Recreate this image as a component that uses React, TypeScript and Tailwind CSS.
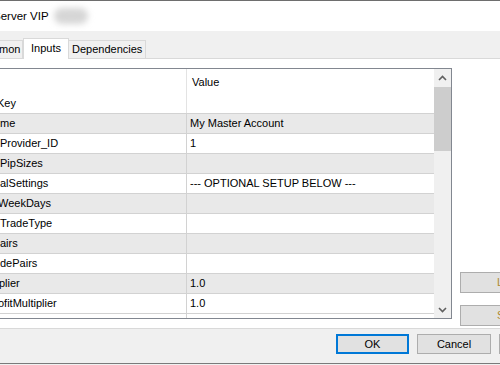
import React from "react";

interface Row {
  key: string;
  keyOffset: string;
  value: string;
}

const rows: Row[] = [
  { key: "me", keyOffset: "ml-0", value: "My Master Account" },
  { key: "Provider_ID", keyOffset: "ml-0", value: "1" },
  { key: "PipSizes", keyOffset: "ml-0", value: "" },
  { key: "alSettings", keyOffset: "ml-0", value: "--- OPTIONAL SETUP BELOW ---" },
  { key: "WeekDays", keyOffset: "-ml-[2px]", value: "" },
  { key: "TradeType", keyOffset: "ml-0", value: "" },
  { key: "airs", keyOffset: "ml-0", value: "" },
  { key: "dePairs", keyOffset: "ml-0", value: "" },
  { key: "plier", keyOffset: "-ml-[1px]", value: "1.0" },
  { key: "ofitMultiplier", keyOffset: "-ml-[2px]", value: "1.0" },
  { key: "", keyOffset: "ml-0", value: "" },
];

const Chevron: React.FC<{ down?: boolean }> = ({ down }) => (
  <svg width="9" height="6" viewBox="0 0 9 6" className="block">
    <path
      d={down ? "M1 1 L4.5 4.5 L8 1" : "M1 5 L4.5 1.5 L8 5"}
      fill="none"
      stroke="#606060"
      strokeWidth="1.6"
    />
  </svg>
);

const App: React.FC = () => {
  return (
    <div className="w-[500px] h-[365px] overflow-hidden bg-[#f0f0f0] flex flex-col text-black font-['Liberation_Sans',Arial,sans-serif] text-[11px] leading-[13px]">
      <div className="h-px shrink-0 bg-[#6e6e6e]" />

      {/* title bar */}
      <div className="h-[30px] shrink-0 bg-white flex items-center">
        <span className="-ml-[7px] text-[11.5px] whitespace-nowrap">Server VIP</span>
        <div className="ml-[5px] w-[34px] h-[16px] rounded-full bg-[#d6d6d6] blur-[3px]" />
      </div>

      {/* tab strip */}
      <div className="h-[27px] shrink-0 flex items-end">
        <div className="h-[18px] w-[23px] border border-b-0 border-l-0 border-[#d9d9d9] flex items-center overflow-hidden">
          <span className="-ml-[1px]">mon</span>
        </div>
        <div className="relative z-10 -mb-px h-[21px] w-[46px] bg-white border border-b-0 border-[#d9d9d9] flex items-start justify-center pt-[3px]">
          Inputs
        </div>
        <div className="h-[18px] w-[77px] border border-b-0 border-l-0 border-[#d9d9d9] flex items-center pl-[3px]">
          Dependencies
        </div>
      </div>

      {/* tab page */}
      <div className="h-[271px] shrink-0 bg-white border-y border-[#d9d9d9] flex pt-[9px]">
        {/* property grid */}
        <div className="-ml-[3px] w-[455px] h-[251px] shrink-0 border border-[#828790] flex overflow-hidden">
          <div className="w-[436px] flex flex-col overflow-hidden">
            <div className="h-[45px] shrink-0 flex border-b border-[#d2d2d2]">
              <div className="w-[189px] shrink-0 border-r border-[#e3e3e3] flex items-end pb-[3px]">
                <span className="-ml-[1px]">Key</span>
              </div>
              <div className="flex-1 pt-[7px] pl-[5px]">Value</div>
            </div>
            {rows.map((r, i) => (
              <div
                key={i}
                className={`h-[20px] shrink-0 flex border-b border-[#d2d2d2] ${
                  i % 2 === 0 && i < 10 ? "bg-[#e9e9e9]" : "bg-white"
                }`}
              >
                <div className="w-[189px] shrink-0 border-r border-[#d2d2d2] flex items-center pl-[2px] overflow-hidden whitespace-nowrap">
                  <span className={r.keyOffset}>{r.key}</span>
                </div>
                <div className="flex-1 flex items-center pl-[3px] whitespace-nowrap">{r.value}</div>
              </div>
            ))}
          </div>
          {/* scrollbar */}
          <div className="w-[17px] shrink-0 bg-[#f0f0f0] flex flex-col">
            <div className="h-[17px] flex items-center justify-center pt-[1px]">
              <Chevron />
            </div>
            <div className="mt-px h-[64px] bg-[#cdcdcd]" />
            <div className="flex-1" />
            <div className="h-[17px] flex items-center justify-center">
              <Chevron down />
            </div>
          </div>
        </div>

        {/* side buttons */}
        <div className="ml-[8px] flex flex-col gap-[12px] pt-[204px]">
          <div className="w-[75px] h-[21px] shrink-0 bg-[#e1e1e1] border border-[#adadad] flex items-center pl-[36px] text-[#b08a2e]">
            Load
          </div>
          <div className="w-[75px] h-[21px] shrink-0 bg-[#e1e1e1] border border-[#adadad] flex items-center pl-[36px] text-[#b08a2e]">
            Save
          </div>
        </div>
      </div>

      {/* dialog buttons */}
      <div className="h-[5px] shrink-0" />
      <div className="h-[20px] shrink-0 flex gap-[8px] pl-[336px]">
        <div className="w-[73px] shrink-0 bg-[#e1e1e1] border-2 border-[#0078d7] flex items-center justify-center">
          OK
        </div>
        <div className="w-[74px] shrink-0 bg-[#e1e1e1] border border-[#adadad] flex items-center justify-center">
          Cancel
        </div>
        <div className="w-[74px] shrink-0 bg-[#e1e1e1] border border-[#adadad] flex items-center justify-center">
          Apply
        </div>
      </div>
      <div className="h-[9px] shrink-0" />
      <div className="h-px shrink-0 bg-[#7a7a7a]" />
      <div className="flex-1" />
    </div>
  );
};

export default App;
